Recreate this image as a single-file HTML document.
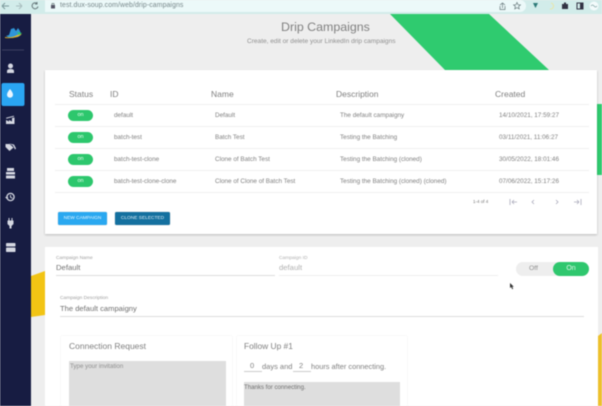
<!DOCTYPE html>
<html><head><meta charset="utf-8">
<style>
html,body{margin:0;padding:0;width:602px;height:406px;overflow:hidden;background:#eee}
#r{position:absolute;left:0;top:0;width:602px;height:406px;overflow:hidden;background:#eee;font-family:"Liberation Sans",sans-serif;filter:blur(.6px);color:#666}
.a,.t{position:absolute}
.t{white-space:nowrap;line-height:1}
.h{font-size:8.5px;color:#808080;top:90px}
.c{font-size:6.35px;color:#808080}
.on{position:absolute;left:68px;width:25px;height:11px;border-radius:6px;background:#2dc76d;color:#e8fff0;font-size:5.5px;line-height:11px;text-align:center}
.ln{position:absolute;left:55px;width:534px;height:1px;background:#f0f0f0}
</style></head><body><div id="r">
<!-- browser bar -->
<div class="a" style="left:0;top:0;width:602px;height:14px;background:#d2ecea"></div>
<div class="a" style="left:45px;top:0;width:481px;height:12px;background:#ecf9f9;border-radius:0 7px 7px 0"></div>
<svg class="a" style="left:0;top:0" width="602" height="14" fill="none" stroke="#66777a" stroke-width="1">
<path d="M2 6h7M2 6l3-3M2 6l3 3" stroke="#7d9a9c"/><path d="M16 6h6M22 6l-3-3M22 6l-3 3" stroke="#a8bdbe"/>
<path d="M37 3.500a3 3 0 1 0 1 3M37 2v2h-2"/>
<rect x="51" y="5" width="4" height="3.500" fill="#556" stroke="none"/><path d="M52 5V3.500h2V5" stroke-width=".7"/>
<path d="M500 5l2.500-2 2.500 2M502.500 3v5M500 6v3.500h5V6" stroke-width=".7"/>
<path d="M517 2.500l1 2.200 2.400.2-1.800 1.600.6 2.400-2.200-1.300-2.200 1.300.6-2.400-1.800-1.600 2.400-.2z" stroke-width=".7"/>
<path d="M533 3h5l-2.500 5z" fill="#2d7a78" stroke="none"/>
<path d="M551 3a3 3 0 1 1-1 6" stroke="#e9e6a8"/>
<path d="M562 4h2v-1.500h2V4h2v5h-6z" fill="#334" stroke="none"/>
<rect x="577" y="3" width="6" height="6" stroke="#334"/><rect x="580" y="3" width="3" height="6" fill="#334" stroke="none"/>
<circle cx="594" cy="6" r="4.500" fill="#f3fbfb" stroke="none"/><path d="M591 6q1.500-2 3 0t3 0" stroke="#8aa" stroke-width=".7"/>
</svg>
<div class="t" style="left:60px;top:2.500px;font-size:6.900px;color:#77878a;letter-spacing:.1px">test.dux-soup.com/web/drip-campaigns</div>

<!-- sidebar -->
<div class="a" style="left:0;top:14px;width:31px;height:392px;background:#171c42"></div>
<svg class="a" style="left:0;top:14px" width="31" height="392" fill="#d5d8e2">
<path d="M6 22l3-1 2-6 3-1 2 3 2-3 2 3 1 4-3 2-8 1z" fill="#2f95d8"/>
<path d="M5 23q7 1 12-2l5-1q-5 5-17 4z" fill="#e4b826"/><path d="M17 18l5 1-3 2z" fill="#2dc76d"/>
<rect x="2" y="35.500" width="22" height="1" fill="#3b4060"/>
<circle cx="10.500" cy="52" r="2.500"/><path d="M7 59v-2q0-2 3.500-2t3.500 2v2z"/>
<rect x="1.500" y="69" width="23" height="23" rx="2" fill="#2aa5f2"/>
<path d="M10 75q3 3.500 3 5.700a3 3 0 0 1-6 0q0-2.200 3-5.700z" fill="#eaf6ff"/>
<path d="M6 110v-4l3 1.500V106l3 1.500V104l2.500-.5v6.500z"/><rect x="6" y="103" width="8" height="1" transform="rotate(-15 9 103)"/>
<path d="M5.500 130v3l4 4 4-3.500-4-3.500z"/><path d="M9 129.500l5 1 2 4-1 1-2-4z"/>
<rect x="7" y="154" width="7" height="3"/><rect x="6" y="158" width="9" height="2.500"/><rect x="6" y="161.500" width="9" height="3"/>
<circle cx="10.500" cy="183" r="3.600" fill="none" stroke="#d5d8e2" stroke-width="1.300"/><path d="M10 181h1v2l1.800 1-.4.8-2.400-1.300z"/><path d="M5 183h3.500l-1.800 2z"/>
<path d="M8.500 204h1v2.500h2V204h1v2.500h1v3.500l-2 2v2.500h-2V212l-2-2v-3.500h1z"/>
<rect x="6" y="229" width="9.500" height="3.500" rx=".8"/><rect x="6" y="233.500" width="9.500" height="4.500" rx=".8"/>
</svg>

<!-- decorations -->
<svg class="a" style="left:0;top:0" width="602" height="406">
<polygon points="390,14 489,14 549,70 445,70" fill="#2fcb6f"/>
<rect x="597" y="104" width="5" height="71" fill="#2fcb6f"/>
<polygon points="31,276 45,271 45,315 31,317" fill="#f2c414"/>
<polygon points="598,336 602,333 602,406 598,406" fill="#edc02c"/>
</svg>

<div class="t" style="left:281px;top:21px;font-size:12.400px;color:#808080">Drip Campaigns</div>
<div class="t" style="left:247px;top:39px;font-size:6.550px;color:#909090">Create, edit or delete your LinkedIn drip campaigns</div>

<!-- card 1 -->
<div class="a" style="left:45px;top:70px;width:552px;height:164px;background:#fff;box-shadow:0 1px 2px rgba(0,0,0,.22)"></div>
<div class="t h" style="left:69px">Status</div>
<div class="t h" style="left:110px">ID</div>
<div class="t h" style="left:211px">Name</div>
<div class="t h" style="left:336px">Description</div>
<div class="t h" style="left:495px">Created</div>
<div class="ln" style="top:104px"></div>
<div class="ln" style="top:126px"></div>
<div class="ln" style="top:148px"></div>
<div class="ln" style="top:170px"></div>
<div class="ln" style="top:192px"></div>

<div class="on" style="top:110px">on</div>
<div class="on" style="top:132px">on</div>
<div class="on" style="top:154px">on</div>
<div class="on" style="top:176px">on</div>

<div class="t c" style="left:114px;top:112.500px">default</div>
<div class="t c" style="left:215px;top:112.500px">Default</div>
<div class="t c" style="left:340px;top:112.500px">The default campaigny</div>
<div class="t c" style="left:499px;top:112.500px">14/10/2021, 17:59:27</div>

<div class="t c" style="left:114px;top:135px">batch-test</div>
<div class="t c" style="left:215px;top:135px">Batch Test</div>
<div class="t c" style="left:340px;top:135px">Testing the Batching</div>
<div class="t c" style="left:499px;top:135px">03/11/2021, 11:06:27</div>

<div class="t c" style="left:114px;top:157px">batch-test-clone</div>
<div class="t c" style="left:215px;top:157px">Clone of Batch Test</div>
<div class="t c" style="left:340px;top:157px">Testing the Batching (cloned)</div>
<div class="t c" style="left:499px;top:157px">30/05/2022, 18:01:46</div>

<div class="t c" style="left:114px;top:179px">batch-test-clone-clone</div>
<div class="t c" style="left:215px;top:179px">Clone of Clone of Batch Test</div>
<div class="t c" style="left:340px;top:179px">Testing the Batching (cloned) (cloned)</div>
<div class="t c" style="left:499px;top:179px">07/06/2022, 15:17:26</div>

<div class="t" style="left:473px;top:199.500px;font-size:4.500px;color:#777">1-4 of 4</div>
<svg class="a" style="left:505px;top:196px" width="80" height="12" fill="none" stroke="#aab" stroke-width=".8">
<path d="M5 3v6M12 6H7M7 6l2-2M7 6l2 2"/><path d="M29 4l-2 2 2 2"/><path d="M51 4l2 2-2 2"/><path d="M69 6h5M74 6l-2-2M74 6l-2 2M76 3v6"/>
</svg>

<div class="a" style="left:58px;top:212px;width:49px;height:13px;background:#2aa8f0;border-radius:1.500px;box-shadow:0 0 1px rgba(0,0,0,.3);color:#e6f6ff;font-size:4.800px;line-height:13px;text-align:center">NEW CAMPAIGN</div>
<div class="a" style="left:115px;top:212px;width:55px;height:13px;background:#14709f;border-radius:1.500px;box-shadow:0 0 1px rgba(0,0,0,.3);color:#dcedf6;font-size:4.800px;line-height:13px;text-align:center">CLONE SELECTED</div>

<!-- card 2 -->
<div class="a" style="left:45px;top:247px;width:553px;height:159px;background:#fff"></div>
<div class="t" style="left:56px;top:257px;font-size:4.900px;color:#a0a0a0">Campaign Name</div>
<div class="t" style="left:56px;top:264px;font-size:7.700px;color:#707070">Default</div>
<div class="a" style="left:56px;top:275px;width:219px;height:1px;background:#ddd"></div>
<div class="t" style="left:279px;top:257px;font-size:4.900px;color:#b0b0b0">Campaign ID</div>
<div class="t" style="left:279px;top:264px;font-size:7.700px;color:#b0b0b0">default</div>
<div class="a" style="left:279px;top:275px;width:219px;height:1px;background:#eee"></div>

<div class="a" style="left:516px;top:262px;width:70px;height:14px;border-radius:7px;background:#eee"></div>
<div class="a" style="left:553px;top:262px;width:36px;height:14px;border-radius:7px;background:#2fc76e;color:#dff8e8;font-size:7px;line-height:14px;text-align:center">On</div>
<div class="t" style="left:529px;top:266px;font-size:6.800px;color:#909090">Off</div>
<svg class="a" style="left:509px;top:282px" width="6" height="9"><path d="M1 1l0 5 1.200-1 1 2.200 1-.5-1-2h1.600z" fill="#333"/></svg>

<div class="t" style="left:60px;top:297px;font-size:4.900px;color:#a0a0a0">Campaign Description</div>
<div class="t" style="left:60px;top:305px;font-size:7.600px;color:#707070">The default campaigny</div>
<div class="a" style="left:60px;top:316px;width:524px;height:1px;background:#ddd"></div>

<div class="a" style="left:61px;top:336px;width:171px;height:70px;background:#fff;box-shadow:0 0 2px rgba(0,0,0,.07)"></div>
<div class="t" style="left:69px;top:342px;font-size:8.500px;color:#808080">Connection Request</div>
<div class="a" style="left:69px;top:361px;width:157px;height:45px;background:#dedede"></div>
<div class="t" style="left:70px;top:363.500px;font-size:6.200px;color:#909090">Type your invitation</div>

<div class="a" style="left:237px;top:336px;width:170px;height:70px;background:#fff;box-shadow:0 0 2px rgba(0,0,0,.07)"></div>
<div class="t" style="left:244px;top:342px;font-size:8.400px;color:#808080">Follow Up #1</div>
<div class="t" style="left:250px;top:362px;font-size:7.500px;color:#808080">0</div>
<div class="a" style="left:244px;top:371px;width:18px;height:1px;background:#ccc"></div>
<div class="t" style="left:262px;top:362.500px;font-size:7.500px;color:#808080">days and</div>
<div class="t" style="left:299px;top:362px;font-size:7.500px;color:#808080">2</div>
<div class="a" style="left:293px;top:371px;width:18px;height:1px;background:#ccc"></div>
<div class="t" style="left:311px;top:362.500px;font-size:7.400px;color:#808080">hours after connecting.</div>
<div class="a" style="left:244px;top:382px;width:156px;height:24px;background:#dedede"></div>
<div class="t" style="left:244px;top:385px;font-size:6.100px;color:#707070">Thanks for connecting.</div>
</div></body></html>
